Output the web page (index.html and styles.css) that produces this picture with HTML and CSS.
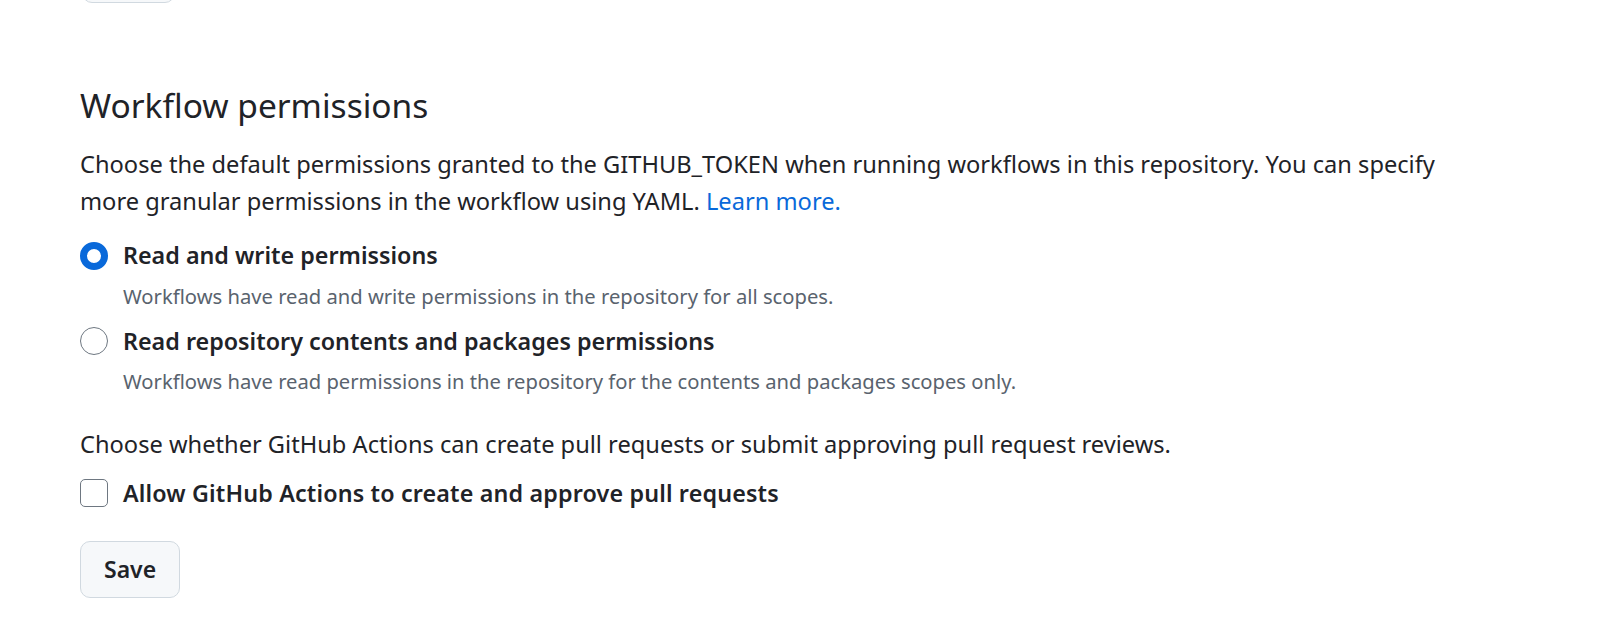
FILE: index.html
```html
<!DOCTYPE html>
<html lang="en">
<head>
<meta charset="utf-8">
<title>Workflow permissions</title>
<link rel="stylesheet" href="styles.css">
</head>
<body>
<div class="page">
  <div class="prev-btn"></div>
  <h2 class="heading">Workflow permissions</h2>
  <p class="intro">Choose the default permissions granted to the GITHUB_TOKEN when running workflows in this repository. You can specify more granular permissions in the workflow using YAML. <a href="#" class="link">Learn more.</a></p>

  <div class="option option-first">
    <label class="opt-row"><span class="radio radio-checked"></span><span class="opt-label">Read and write permissions</span></label>
    <p class="opt-note">Workflows have read and write permissions in the repository for all scopes.</p>
  </div>
  <div class="option option-second">
    <label class="opt-row"><span class="radio"></span><span class="opt-label">Read repository contents and packages permissions</span></label>
    <p class="opt-note">Workflows have read permissions in the repository for the contents and packages scopes only.</p>
  </div>

  <p class="intro intro-pr">Choose whether GitHub Actions can create pull requests or submit approving pull request reviews.</p>
  <label class="opt-row check-row"><span class="checkbox"></span><span class="opt-label">Allow GitHub Actions to create and approve pull requests</span></label>

  <button class="btn">Save</button>
</div>
</body>
</html>
```

FILE: styles.css
```css
html, body {
  margin: 0;
  padding: 0;
  background: #ffffff;
}
body {
  font-family: "Noto Sans", "Open Sans", sans-serif;
  color: #1f2328;
  overflow: hidden;
}
.page {
  width: 1400px;
  padding-left: 80px;
  display: flex;
  flex-direction: column;
  align-items: flex-start;
}
.prev-btn {
  width: 93px;
  height: 40px;
  margin-top: -37px;
  margin-left: 2px;
  border: 1.75px solid #d1d9e0;
  border-radius: 10px;
  background: #f6f8fa;
  box-sizing: border-box;
}
.heading {
  margin: 76px 0 0 0;
  font-size: 33.5px;
  font-weight: 400;
  line-height: 52px;
}
.intro {
  margin: 14.5px 0 0 0;
  font-size: 23.65px;
  line-height: 37px;
}
.link {
  color: #0969da;
  text-decoration: none;
}
.option-first { margin-top: 17.5px; }
.option-second { margin-top: 10.5px; }
.opt-row {
  display: flex;
  align-items: center;
  gap: 15px;
  font-size: 23.3px;
  line-height: 37px;
}
.opt-label {
  font-weight: 600;
}
.radio {
  width: 28px;
  height: 28px;
  box-sizing: border-box;
  border-radius: 50%;
  border: 1.5px solid #6e7781;
  flex: none;
}
.radio-checked {
  border: 7px solid #0969da;
}
.opt-note {
  margin: 6.5px 0 0 43px;
  font-size: 20.2px;
  line-height: 31.5px;
  color: #59636e;
}
.option-second .opt-note {
  margin-top: 6px;
}
.intro-pr {
  margin-top: 28.5px;
}
.check-row {
  margin-top: 12px;
}
.check-row .opt-label {
  letter-spacing: 0.15px;
}
.checkbox {
  width: 28px;
  height: 28px;
  box-sizing: border-box;
  border-radius: 5px;
  border: 1.75px solid #6e7781;
  flex: none;
}
.btn {
  margin-top: 29px;
  height: 57px;
  padding: 0 23px;
  min-width: 97px;
  font-family: inherit;
  font-size: 23px;
  font-weight: 600;
  color: #1f2328;
  background: #f6f8fa;
  border: 1.75px solid #d1d9e0;
  border-radius: 10px;
  box-sizing: border-box;
  text-align: center;
}
```
